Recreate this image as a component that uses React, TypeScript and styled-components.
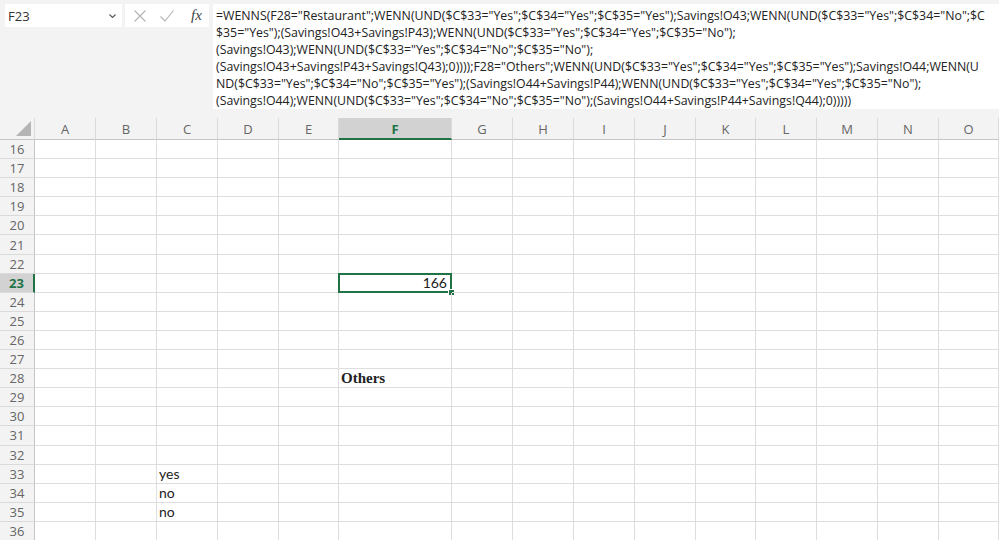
import React from "react";
import styled, { createGlobalStyle, css } from "styled-components";

const GlobalStyle = createGlobalStyle`
  html, body {
    margin: 0;
    padding: 0;
    background: #ffffff;
  }
  body {
    font-family: "Open Sans", "Noto Sans", sans-serif;
  }
`;

const COLUMNS = ["A", "B", "C", "D", "E", "F", "G", "H", "I", "J", "K", "L", "M", "N", "O"];
const WIDTHS = [61, 61, 61, 61, 60, 113, 61, 61, 61, 61, 60, 61, 61, 61, 60];
const GRID_TEMPLATE = `35px ${WIDTHS.map((w) => `${w}px`).join(" ")}`;
const GREEN = "#217346";

const FORMULA_LINES = [
  '=WENNS(F28="Restaurant";WENN(UND($C$33="Yes";$C$34="Yes";$C$35="Yes");Savings!O43;WENN(UND($C$33="Yes";$C$34="No";$C',
  '$35="Yes");(Savings!O43+Savings!P43);WENN(UND($C$33="Yes";$C$34="Yes";$C$35="No");',
  '(Savings!O43);WENN(UND($C$33="Yes";$C$34="No";$C$35="No");',
  '(Savings!O43+Savings!P43+Savings!Q43);0))));F28="Others";WENN(UND($C$33="Yes";$C$34="Yes";$C$35="Yes");Savings!O44;WENN(U',
  'ND($C$33="Yes";$C$34="No";$C$35="Yes");(Savings!O44+Savings!P44);WENN(UND($C$33="Yes";$C$34="Yes";$C$35="No");',
  '(Savings!O44);WENN(UND($C$33="Yes";$C$34="No";$C$35="No");(Savings!O44+Savings!P44+Savings!Q44);0)))))',
];

type CellData = { text: string; align?: "left" | "right"; serif?: boolean };

const CELLS: Record<string, CellData> = {
  F23: { text: "166", align: "right" },
  F28: { text: "Others", serif: true },
  C33: { text: "yes" },
  C34: { text: "no" },
  C35: { text: "no" },
};

const ACTIVE_COL = "F";
const ACTIVE_ROW = 23;

const Page = styled.div`
  width: 999px;
  height: 540px;
  overflow: hidden;
  background: #f3f3f3;
  display: flex;
  flex-direction: column;
`;

const FormulaBar = styled.div`
  display: flex;
  align-items: flex-start;
  padding: 4px 0 9px 5px;
  gap: 2px;
`;

const NameBox = styled.div`
  width: 117px;
  height: 23px;
  box-sizing: border-box;
  background: #ffffff;
  display: flex;
  align-items: center;
  justify-content: space-between;
  padding: 0 5px 0 3px;
  font-size: 13px;
  color: #333333;
`;

const ActionBox = styled.div`
  width: 84px;
  height: 23px;
  margin-left: 1px;
  background: #ffffff;
  display: flex;
  align-items: center;
  padding-left: 8px;
  gap: 12px;
  box-sizing: border-box;
`;

const Fx = styled.span`
  font-family: "Liberation Serif", "DejaVu Serif", serif;
  font-style: italic;
  font-size: 15px;
  color: #444444;
  margin-left: 4px;
`;

const FormulaBox = styled.div`
  flex: 1;
  margin-left: 2px;
  height: 105px;
  background: #ffffff;
  box-sizing: border-box;
  padding: 3px 0 0 3px;
  font-size: 12.35px;
  line-height: 17px;
  color: #222222;
  white-space: nowrap;
  overflow: hidden;
`;

const FormulaLine = styled.div`
  height: 17px;
`;

const Sheet = styled.div`
  display: grid;
  grid-template-columns: ${GRID_TEMPLATE};
  grid-template-rows: 22px;
  grid-auto-rows: 19.1px;
  background: #ffffff;
`;

const headerText = css`
  font-family: "Open Sans", "Noto Sans", sans-serif;
  font-size: 13px;
  color: #666666;
  background: #f3f3f3;
  box-sizing: border-box;
  display: flex;
  align-items: center;
  justify-content: center;
`;

const Corner = styled.div`
  ${headerText};
  border-bottom: 1px solid #c6c6c6;
  border-right: 1px solid #dadada;
  justify-content: flex-end;
  align-items: flex-end;
  padding: 0 3px 3px 0;
`;

const ColHeader = styled.div<{ $active?: boolean }>`
  ${headerText};
  border-right: 1px solid #dadada;
  border-bottom: 1px solid #c6c6c6;
  padding-top: 1px;
  ${(p) =>
    p.$active &&
    css`
      background: #d2d2d2;
      color: ${GREEN};
      font-weight: 700;
      border-bottom: 2px solid ${GREEN};
    `}
`;

const RowHeader = styled.div<{ $active?: boolean }>`
  ${headerText};
  border-right: 1px solid #c6c6c6;
  border-bottom: 1px solid #dadada;
  ${(p) =>
    p.$active &&
    css`
      background: #d2d2d2;
      color: ${GREEN};
      font-weight: 700;
      border-right: 2px solid ${GREEN};
    `}
`;

const Cell = styled.div<{ $align?: "left" | "right"; $serif?: boolean; $selected?: boolean }>`
  position: relative;
  box-sizing: border-box;
  border-right: 1px solid #dedede;
  border-bottom: 1px solid #dedede;
  display: flex;
  align-items: flex-end;
  justify-content: ${(p) => (p.$align === "right" ? "flex-end" : "flex-start")};
  padding: 0 4px 0 2px;
  font-family: ${(p) =>
    p.$serif ? `"Liberation Serif", "DejaVu Serif", serif` : `Lato, "Open Sans", sans-serif`};
  font-size: ${(p) => (p.$serif ? "15px" : "14px")};
  font-weight: ${(p) => (p.$serif ? 700 : 400)};
  line-height: 18px;
  color: #222222;
  white-space: nowrap;
  ${(p) =>
    p.$selected &&
    css`
      &::before {
        content: "";
        position: absolute;
        left: -1px;
        top: -1px;
        right: -1px;
        bottom: -1px;
        border: 2px solid ${GREEN};
        pointer-events: none;
      }
      &::after {
        content: "";
        position: absolute;
        right: -4px;
        bottom: -4px;
        width: 5px;
        height: 5px;
        background: ${GREEN};
        border: 1px solid #ffffff;
      }
    `}
`;

const Chevron = () => (
  <svg width="9" height="6" viewBox="0 0 9 6">
    <path d="M1.5 1.5 L4.5 4.5 L7.5 1.5" fill="none" stroke="#555" strokeWidth="1.1" />
  </svg>
);

const CancelIcon = () => (
  <svg width="14" height="14" viewBox="0 0 14 14">
    <path d="M1.5 1.5 L12.5 12.5 M12.5 1.5 L1.5 12.5" stroke="#b3b3b3" strokeWidth="1.1" />
  </svg>
);

const EnterIcon = () => (
  <svg width="16" height="14" viewBox="0 0 16 14">
    <path d="M1.5 7.5 L6 12 L14.5 1.5" fill="none" stroke="#b3b3b3" strokeWidth="1.1" />
  </svg>
);

const CornerTriangle = () => (
  <svg width="15" height="15" viewBox="0 0 15 15">
    <polygon points="15,0 15,15 0,15" fill="#b5b5b5" />
  </svg>
);

const rows = Array.from({ length: 21 }, (_, i) => 16 + i);

export default function App() {
  return (
    <>
      <GlobalStyle />
      <Page>
        <FormulaBar>
          <NameBox>
            <span>F23</span>
            <Chevron />
          </NameBox>
          <ActionBox>
            <CancelIcon />
            <EnterIcon />
            <Fx>fx</Fx>
          </ActionBox>
          <FormulaBox>
            {FORMULA_LINES.map((line, i) => (
              <FormulaLine key={i}>{line}</FormulaLine>
            ))}
          </FormulaBox>
        </FormulaBar>
        <Sheet>
          <Corner>
            <CornerTriangle />
          </Corner>
          {COLUMNS.map((c) => (
            <ColHeader key={c} $active={c === ACTIVE_COL}>
              {c}
            </ColHeader>
          ))}
          {rows.map((r) => (
            <React.Fragment key={r}>
              <RowHeader $active={r === ACTIVE_ROW}>{r}</RowHeader>
              {COLUMNS.map((c) => {
                const data = CELLS[`${c}${r}`];
                return (
                  <Cell
                    key={c}
                    $align={data?.align}
                    $serif={data?.serif}
                    $selected={c === ACTIVE_COL && r === ACTIVE_ROW}
                  >
                    {data?.text}
                  </Cell>
                );
              })}
            </React.Fragment>
          ))}
        </Sheet>
      </Page>
    </>
  );
}
